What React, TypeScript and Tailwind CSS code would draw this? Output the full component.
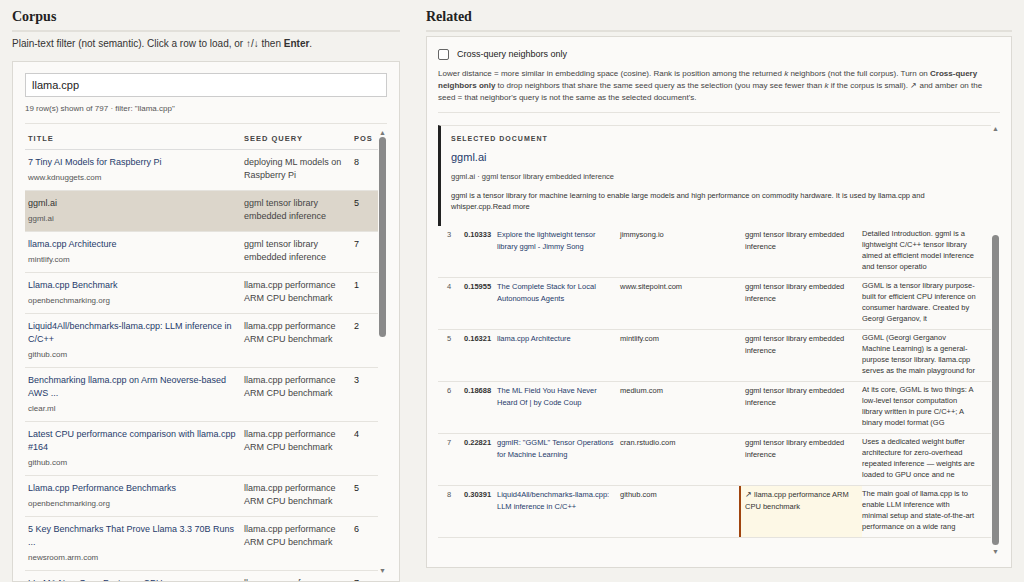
import React from "react";

const corpus = [
  ["7 Tiny AI Models for Raspberry Pi", "www.kdnuggets.com", "deploying ML models on Raspberry Pi", "8"],
  ["ggml.ai", "ggml.ai", "ggml tensor library embedded inference", "5"],
  ["llama.cpp Architecture", "mintlify.com", "ggml tensor library embedded inference", "7"],
  ["Llama.cpp Benchmark", "openbenchmarking.org", "llama.cpp performance ARM CPU benchmark", "1"],
  ["Liquid4All/benchmarks-llama.cpp: LLM inference in C/C++", "github.com", "llama.cpp performance ARM CPU benchmark", "2"],
  ["Benchmarking llama.cpp on Arm Neoverse-based AWS ...", "clear.ml", "llama.cpp performance ARM CPU benchmark", "3"],
  ["Latest CPU performance comparison with llama.cpp #164", "github.com", "llama.cpp performance ARM CPU benchmark", "4"],
  ["Llama.cpp Performance Benchmarks", "openbenchmarking.org", "llama.cpp performance ARM CPU benchmark", "5"],
  ["5 Key Benchmarks That Prove Llama 3.3 70B Runs ...", "newsroom.arm.com", "llama.cpp performance ARM CPU benchmark", "6"],
  ["LLaMA Now Goes Faster on CPUs", "", "llama.cpp performance", "7"],
];

const related = [
  ["3", "0.10333", "Explore the lightweight tensor library ggml - Jimmy Song", "jimmysong.io", "ggml tensor library embedded inference", "Detailed Introduction. ggml is a lightweight C/C++ tensor library aimed at efficient model inference and tensor operatio", false],
  ["4", "0.15955", "The Complete Stack for Local Autonomous Agents", "www.sitepoint.com", "ggml tensor library embedded inference", "GGML is a tensor library purpose-built for efficient CPU inference on consumer hardware. Created by Georgi Gerganov, it", false],
  ["5", "0.16321", "llama.cpp Architecture", "mintlify.com", "ggml tensor library embedded inference", "GGML (Georgi Gerganov Machine Learning) is a general-purpose tensor library. llama.cpp serves as the main playground for", false],
  ["6", "0.18688", "The ML Field You Have Never Heard Of | by Code Coup", "medium.com", "ggml tensor library embedded inference", "At its core, GGML is two things: A low-level tensor computation library written in pure C/C++; A binary model format (GG", false],
  ["7", "0.22821", "ggmlR: \"GGML\" Tensor Operations for Machine Learning", "cran.rstudio.com", "ggml tensor library embedded inference", "Uses a dedicated weight buffer architecture for zero-overhead repeated inference — weights are loaded to GPU once and ne", false],
  ["8", "0.30391", "Liquid4All/benchmarks-llama.cpp: LLM inference in C/C++", "github.com", "llama.cpp performance ARM CPU benchmark", "The main goal of llama.cpp is to enable LLM inference with minimal setup and state-of-the-art performance on a wide rang", true],
] as const;

function Scrollbar({ top, h }: { top: string; h: string }) {
  return (
    <div className="w-[9px] shrink-0 flex flex-col items-center">
      <div className="text-[7px] leading-[8px] text-[#777]">▲</div>
      <div className={`w-[7px] rounded-full bg-[#8a8a8a] ${top} ${h}`} />
      <div className="flex-1" />
      <div className="text-[7px] leading-[8px] text-[#777]">▼</div>
    </div>
  );
}

export default function App() {
  const sans = { fontFamily: "Arial, 'Liberation Sans', sans-serif" };
  return (
    <div className="w-[1024px] h-[582px] overflow-hidden bg-[#f3f2ee] flex gap-[26px] px-[12px] text-[#222]" style={sans}>
      <div className="w-[388px] flex flex-col">
        <h2 className="font-bold text-[14px] leading-[18px] pt-[8px] pb-[4px] border-b-2 border-[#e2e0da]" style={{ fontFamily: "'Liberation Serif', serif" }}>Corpus</h2>
        <div className="text-[10px] text-[#333] mt-[5px] leading-[14px]">Plain-text filter (not semantic). Click a row to load, or ↑/↓ then <b>Enter</b>.</div>
        <div className="mt-[10px] flex-1 bg-[#fbfaf8] border border-[#dcdad4] px-[12px] pt-[11px] flex flex-col min-h-0">
          <div className="h-[24px] border border-[#ccc] bg-white px-[6px] text-[11px] flex items-center shrink-0">llama.cpp</div>
          <div className="text-[8px] text-[#555] mt-[6px] pb-[8px] border-b border-[#e5e3de]">19 row(s) shown of 797 · filter: "llama.cpp"</div>
          <div className="flex flex-1 min-h-0 overflow-hidden">
            <div className="flex-1 overflow-hidden">
              <div className="flex text-[7.5px] tracking-[1px] font-bold text-[#444] h-[21px] items-center border-b border-[#ddd] mt-[5px]">
                <div className="w-[219px] pl-[3px]">TITLE</div>
                <div className="w-[110px]">SEED QUERY</div>
                <div>POS</div>
              </div>
              {corpus.map((r, i) => (
                <div key={i} className={`flex border-b border-[#e5e3de] pt-[6px] pb-[7px] ${i === 1 ? "bg-[#dcd6cb]" : ""}`}>
                  <div className="w-[219px] pl-[3px] pr-[8px]">
                    <div className={`text-[9px] leading-[13px] ${i === 1 ? "text-[#333]" : "text-[#1f3a6b]"}`}>{r[0]}</div>
                    {r[1] && <div className="text-[8px] leading-[10px] text-[#555] mt-[4px]">{r[1]}</div>}
                  </div>
                  <div className="w-[110px] text-[9px] leading-[13px] text-[#444] pr-[4px]">{r[2]}</div>
                  <div className="text-[9px] leading-[13px] text-[#222]">{r[3]}</div>
                </div>
              ))}
            </div>
            <div className="pt-[5px] pb-[6px] flex"><Scrollbar top="mt-[0px]" h="h-[200px]" /></div>
          </div>
        </div>
      </div>

      <div className="w-[586px] flex flex-col pb-[14px]">
        <h2 className="font-bold text-[14px] leading-[18px] pt-[8px] pb-[4px] border-b-2 border-[#e2e0da]" style={{ fontFamily: "'Liberation Serif', serif" }}>Related</h2>
        <div className="mt-[4px] flex-1 bg-[#fbfaf8] border border-[#dcdad4] px-[11px] pt-[11px] flex flex-col min-h-0">
          <label className="flex items-center gap-[8px] text-[9px] text-[#222]">
            <span className="w-[11px] h-[11px] border border-[#666] rounded-[2px] bg-white" />Cross-query neighbors only
          </label>
          <p className="text-[8px] leading-[12px] text-[#444] mt-[6px] pb-[8px] border-b border-[#e5e3de]">
            Lower distance = more similar in embedding space (cosine). Rank is position among the returned <i>k</i> neighbors (not the full corpus). Turn on <b>Cross-query neighbors only</b> to drop neighbors that share the same seed query as the selection (you may see fewer than <i>k</i> if the corpus is small). ↗ and amber on the seed = that neighbor's query is not the same as the selected document's.
          </p>
          <div className="flex flex-1 min-h-0 mt-[12px] mb-[11px] overflow-hidden">
            <div className="flex-1 overflow-hidden">
              <div className="border-l-[3px] border-[#222] pl-[10px] pr-[30px] pt-[8px] pb-[14px] border-t border-t-[#e5e3de]">
                <div className="text-[7px] tracking-[1px] font-bold text-[#444]">SELECTED DOCUMENT</div>
                <div className="text-[11px] text-[#1f3a6b] mt-[5px]">ggml.ai</div>
                <div className="text-[7.5px] text-[#444] mt-[5px]">ggml.ai · ggml tensor library embedded inference</div>
                <div className="text-[7.5px] leading-[11px] text-[#333] mt-[8px]">ggml is a tensor library for machine learning to enable large models and high performance on commodity hardware. It is used by llama.cpp and whisper.cpp.Read more</div>
              </div>
              {related.map((r, i) => (
                <div key={i} className="flex border-b border-[#e5e3de] text-[7.5px] leading-[12px] text-[#333]">
                  <div className="w-[26px] pl-[9px] pt-[3px] text-[#555]">{r[0]}</div>
                  <div className="w-[33px] pt-[3px] font-bold">{r[1]}</div>
                  <div className="w-[123px] pt-[3px] pr-[6px] text-[#1f3a6b]">{r[2]}</div>
                  <div className="w-[119px] pt-[3px]">{r[3]}</div>
                  <div className={`w-[123px] pt-[3px] pb-[6px] pr-[6px] pl-[4px] ${r[6] ? "border-l-2 border-[#a0440e] bg-[#fdf8e6]" : "border-l-2 border-transparent"}`}>{r[6] ? "↗ " : ""}{r[4]}</div>
                  <div className="w-[116px] pt-[2px] pb-[5px] pr-[2px] leading-[11px]">{r[5]}</div>
                </div>
              ))}
            </div>
            <div className="flex"><Scrollbar top="mt-[102px]" h="h-[310px]" /></div>
          </div>
        </div>
      </div>
    </div>
  );
}
